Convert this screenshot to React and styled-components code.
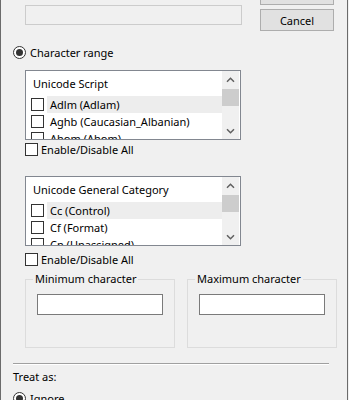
import React from 'react'
import styled, { createGlobalStyle } from 'styled-components'

const GlobalStyle = createGlobalStyle`
    body {
        margin: 0;
        background: #f0f0f0;
        font-family: "Noto Sans", "Liberation Sans", sans-serif;
        font-size: 11px;
        color: #000;
    }
`

const Window = styled.div`
    box-sizing: border-box;
    width: 348px;
    height: 400px;
    overflow: hidden;
    border-left: 1px solid #6b6b6b;
    border-right: 1px solid #6b6b6b;
    padding-left: 12px;
`

const TopRow = styled.div`
    display: flex;
    margin-top: -17px;
    padding-left: 12px;
`

const DisabledInput = styled.div`
    box-sizing: border-box;
    width: 217px;
    height: 20px;
    margin-top: 22px;
    border: 1px solid #cccccc;
    background: #f0f0f0;
`

const ButtonColumn = styled.div`
    display: flex;
    flex-direction: column;
    gap: 4px;
    margin-left: 18px;
`

const Button = styled.button`
    box-sizing: border-box;
    width: 74px;
    height: 22px;
    padding: 0;
    border: 1px solid #adadad;
    background: #e1e1e1;
    font: inherit;
    color: #000;
`

const Row = styled.div`
    display: flex;
    align-items: center;
    height: 16px;
    gap: ${p => p.$gap || 4}px;
    margin-top: ${p => p.$mt || 0}px;
    padding-left: ${p => p.$indent || 0}px;
    white-space: nowrap;
`

const RadioCircle = styled.span`
    box-sizing: border-box;
    width: 13px;
    height: 13px;
    border: 1px solid #333;
    border-radius: 50%;
    background: #fff;
    display: flex;
    align-items: center;
    justify-content: center;
    &::after {
        content: '';
        width: 7px;
        height: 7px;
        border-radius: 50%;
        background: #333;
    }
`

const CheckBox = styled.span`
    box-sizing: border-box;
    flex: none;
    width: 13px;
    height: 13px;
    border: 1px solid #333;
    background: #fff;
`

const Indent = styled.div`
    padding-left: 12px;
`

const ListBox = styled.div`
    box-sizing: border-box;
    display: flex;
    width: 216px;
    height: 70px;
    margin-top: ${p => p.$mt}px;
    border: 1px solid #828790;
    background: #fff;
    padding-right: 1px;
`

const ListContent = styled.div`
    flex: 1;
    overflow: hidden;
`

const ListHeader = styled.div`
    height: 25px;
    display: flex;
    align-items: center;
    padding-left: 7px;
`

const ListItem = styled.div`
    display: flex;
    align-items: center;
    height: 17px;
    padding-left: 5px;
    white-space: nowrap;
`

const ItemLabel = styled.span`
    flex: 1;
    height: 17px;
    line-height: 17px;
    margin-left: 3px;
    padding-left: 3px;
    background: ${p => (p.$hot ? '#ededed' : 'transparent')};
`

const ScrollBar = styled.div`
    width: 17px;
    background: #f0f0f0;
    display: flex;
    flex-direction: column;
`

const ArrowBox = styled.div`
    height: 17px;
    display: flex;
    align-items: center;
    justify-content: center;
    margin-top: ${p => (p.$bottom ? 'auto' : '0')};
`

const Thumb = styled.div`
    height: 17px;
    margin: 1px 0 0;
    background: #cdcdcd;
`

const Groups = styled.div`
    display: flex;
    gap: 12px;
    margin-top: 12px;
    padding-left: 12px;
`

const Group = styled.div`
    position: relative;
    box-sizing: border-box;
    width: 150px;
    height: 69px;
    border: 1px solid #dcdcdc;
    padding: 14px 0 0 11px;
`

const Legend = styled.span`
    position: absolute;
    top: -9px;
    left: 7px;
    padding: 0 2px;
    background: #f0f0f0;
    white-space: nowrap;
`

const TextInput = styled.div`
    box-sizing: border-box;
    width: 126px;
    height: 21px;
    border: 1px solid #7a7a7a;
    background: #fff;
`

const Separator = styled.div`
    width: 316px;
    height: 1px;
    margin-top: 15px;
    background: #a0a0a0;
    border-bottom: 1px solid #fff;
`

const Chevron = ({ down }) => (
    <svg width="9" height="6" viewBox="0 0 9 6">
        <path
            d={down ? 'M1 1.2 L4.5 4.7 L8 1.2' : 'M1 4.8 L4.5 1.3 L8 4.8'}
            fill="none"
            stroke="#606060"
            strokeWidth="1.5"
        />
    </svg>
)

const List = ({ title, items, mt }) => (
    <ListBox $mt={mt}>
        <ListContent>
            <ListHeader>{title}</ListHeader>
            {items.map((item, i) => (
                <ListItem key={item}>
                    <CheckBox />
                    <ItemLabel $hot={i === 0}>{item}</ItemLabel>
                </ListItem>
            ))}
        </ListContent>
        <ScrollBar>
            <ArrowBox><Chevron /></ArrowBox>
            <Thumb />
            <ArrowBox $bottom><Chevron down /></ArrowBox>
        </ScrollBar>
    </ListBox>
)

export default function App() {
    return (
        <Window>
            <GlobalStyle />
            <TopRow>
                <DisabledInput />
                <ButtonColumn>
                    <Button>OK</Button>
                    <Button>Cancel</Button>
                </ButtonColumn>
            </TopRow>

            <Row $mt={13}>
                <RadioCircle />
                <span>Character range</span>
            </Row>

            <Indent>
                <List
                    mt={10}
                    title="Unicode Script"
                    items={['Adlm (Adlam)', 'Aghb (Caucasian_Albanian)', 'Ahom (Ahom)']}
                />
                <Row $mt={1} $gap={3}>
                    <CheckBox />
                    <span>Enable/Disable All</span>
                </Row>
                <List
                    mt={19}
                    title="Unicode General Category"
                    items={['Cc (Control)', 'Cf (Format)', 'Cn (Unassigned)']}
                />
                <Row $mt={5} $gap={3}>
                    <CheckBox />
                    <span>Enable/Disable All</span>
                </Row>
            </Indent>

            <Groups>
                <Group>
                    <Legend>Minimum character</Legend>
                    <TextInput />
                </Group>
                <Group>
                    <Legend>Maximum character</Legend>
                    <TextInput />
                </Group>
            </Groups>

            <Separator />

            <Row $mt={3}>
                <span>Treat as:</span>
            </Row>
            <Row $mt={6}>
                <RadioCircle />
                <span>Ignore</span>
            </Row>
        </Window>
    )
}
